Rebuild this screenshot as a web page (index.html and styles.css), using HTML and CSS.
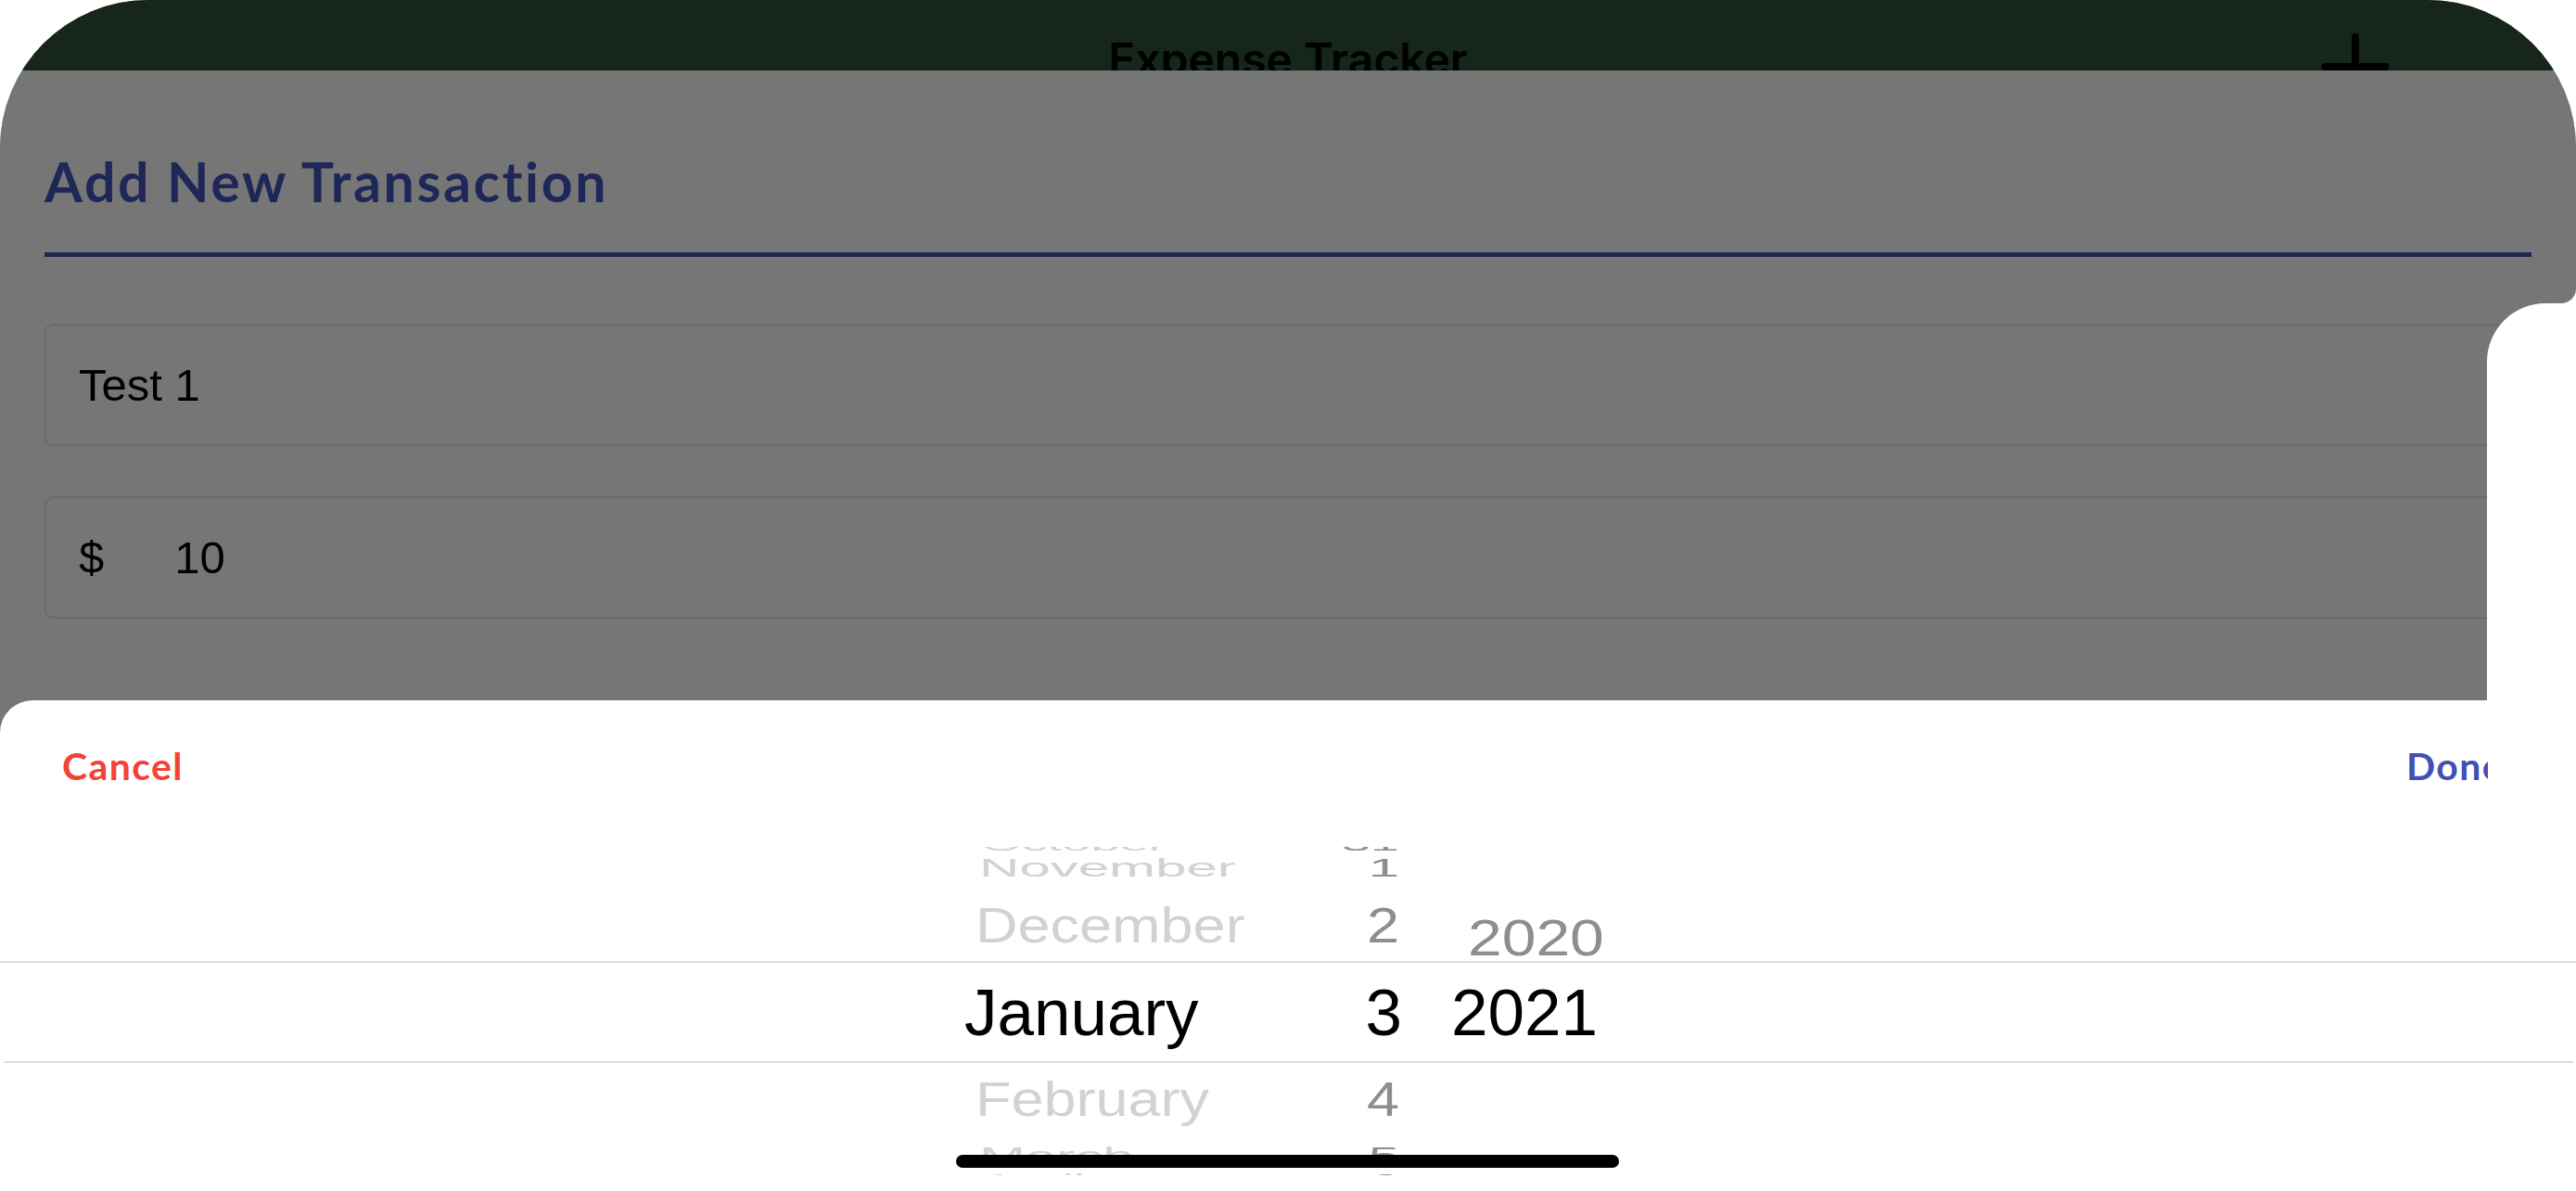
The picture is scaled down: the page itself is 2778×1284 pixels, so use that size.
FILE: index.html
```html
<!DOCTYPE html>
<html lang="en">
<head>
<meta charset="utf-8">
<title>Expense Tracker</title>
<link rel="stylesheet" href="styles.css">
</head>
<body>
<div class="app">
  <header class="topbar">
    <div class="topbar-side"></div>
    <h1 class="topbar-title">Expense Tracker</h1>
    <div class="topbar-side topbar-actions">
      <svg class="plus-icon" width="80" height="80" viewBox="0 0 80 80" aria-hidden="true">
        <path d="M40 8 V73 M7.5 40 H72.5" fill="none" stroke="#000" stroke-width="8" stroke-linecap="round"/>
      </svg>
    </div>
  </header>

  <section class="modal">
    <h2 class="modal-title">Add New Transaction</h2>
    <div class="modal-rule"></div>
    <div class="field field-first"><span class="field-value">Test 1</span></div>
    <div class="field field-second"><span class="field-prefix">$</span><span class="field-value">10</span></div>
    <div class="notch"></div>
    <div class="notch-corner"></div>
  </section>

  <section class="sheet">
    <div class="sheet-toolbar">
      <span class="btn-cancel">Cancel</span>
      <span class="btn-done-clip"><span class="btn-done">Done</span></span>
    </div>
    <div class="picker">
      <div class="picker-col col-month">
        <div class="row r-far-top dim-light shift-far">October</div>
        <div class="row r-near-top dim-light shift-near">November</div>
        <div class="row r-adj-top dim-light">December</div>
        <div class="row r-sel shift-sel">January</div>
        <div class="row r-adj-bot dim-light">February</div>
        <div class="row r-near-bot dim-light shift-near">March</div>
        <div class="row r-far-bot dim-light shift-far">April</div>
      </div>
      <div class="picker-col col-day">
        <div class="row r-far-top dim-dark pad-r">31</div>
        <div class="row r-near-top dim-dark pad-r">1</div>
        <div class="row r-adj-top dim-dark pad-r">2</div>
        <div class="row r-sel">3</div>
        <div class="row r-adj-bot dim-dark pad-r">4</div>
        <div class="row r-near-bot dim-dark pad-r">5</div>
        <div class="row r-far-bot dim-dark pad-r">6</div>
      </div>
      <div class="picker-col col-year">
        <div class="row r-year-prev dim-dark">2020</div>
        <div class="row r-sel">2021</div>
      </div>
    </div>
    <div class="sel-line sel-top"></div>
    <div class="sel-line sel-bottom"></div>
    <div class="home-indicator"></div>
  </section>
</div>
</body>
</html>
```

FILE: styles.css
```css
html, body {
  margin: 0;
  padding: 0;
  width: 2778px;
  height: 1284px;
  overflow: hidden;
  background: #ffffff;
}

.app {
  width: 2778px;
  height: 1284px;
  border-radius: 160px 160px 0 0;
  overflow: hidden;
  background: #767676;
}

/* ---------- top bar ---------- */
.topbar {
  height: 76px;
  overflow: hidden;
  background: #16261a;
  display: grid;
  grid-template-columns: 1fr auto 1fr;
}
.topbar-title {
  margin: 0;
  padding-top: 35px;
  font-family: "Inter", "Liberation Sans", sans-serif;
  font-weight: 600;
  font-size: 48px;
  line-height: 58px;
  color: #000;
  white-space: nowrap;
}
.topbar-actions {
  justify-self: end;
  padding-top: 32px;
  margin-right: 198px;
}
.plus-icon {
  display: block;
}

/* ---------- dimmed modal ---------- */
.modal {
  position: relative;
  height: 679px;
  box-sizing: border-box;
  padding: 85px 48px 0 48px;
  background: #767676;
}
.modal-title {
  margin: 0;
  font-family: "Lato", "Noto Sans", sans-serif;
  font-weight: 700;
  font-size: 59px;
  line-height: 70px;
  letter-spacing: 2.6px;
  color: #1f2758;
  white-space: nowrap;
}
.modal-rule {
  margin-top: 41px;
  height: 5px;
  background: #1f2758;
}
.field {
  height: 132px;
  box-sizing: border-box;
  border: 2px solid #6a6a6a;
  border-radius: 9px;
  display: flex;
  align-items: center;
  padding-left: 35px;
  font-family: "Liberation Sans", Arial, sans-serif;
  font-size: 49px;
  color: #000;
}
.field-first { margin-top: 72px; }
.field-second { margin-top: 54px; }
.field-prefix { margin-right: 76px; }

.notch {
  position: absolute;
  top: 251px;
  right: 0;
  bottom: 0;
  width: 96px;
  background: #ffffff;
  border-top-left-radius: 63px;
}
.notch-corner {
  position: absolute;
  top: 235px;
  right: 0;
  width: 16px;
  height: 16px;
  background: radial-gradient(circle at 0 0, rgba(255,255,255,0) 15.5px, #ffffff 16.5px);
}

/* ---------- bottom sheet ---------- */
.sheet {
  position: relative;
  height: 529px;
  background: #ffffff;
  border-radius: 35px 0 0 0;
}
.sheet-toolbar {
  width: 2683px;
  box-sizing: border-box;
  padding: 47px 0 0 67px;
  display: flex;
  justify-content: space-between;
  overflow: hidden;
  font-family: "Lato", "Noto Sans", sans-serif;
  font-weight: 700;
  font-size: 41px;
  line-height: 48px;
  letter-spacing: 1.4px;
}
.btn-cancel { color: #f44336; }
.btn-done-clip {
  width: 88px;
  overflow: hidden;
  white-space: nowrap;
}
.btn-done { color: #3f51b5; }

/* ---------- wheel picker ---------- */
.picker {
  margin-top: 63px;
  height: 354px;
  overflow: hidden;
  display: flex;
  padding-left: 1052px;
  font-family: "Liberation Sans", Arial, sans-serif;
  color: #000;
}
.picker-col { flex: none; }
.col-month { width: 380px; margin-top: -14px; }
.col-day { width: 80px; margin-top: -14px; text-align: right; }
.col-year { margin-left: 53px; padding-top: 62px; }

.row {
  white-space: nowrap;
  transform-origin: 50% 50%;
}
.r-far-top  { height: 22px; line-height: 22px; font-size: 56px; transform: scaleY(0.35); }
.r-near-top { height: 30px; line-height: 30px; font-size: 60px; transform: scaleY(0.47); }
.r-adj-top  { height: 94px; line-height: 94px; font-size: 63px; transform: scaleY(0.84); }
.r-sel      { height: 94px; line-height: 94px; font-size: 71px; }
.r-adj-bot  { height: 92px; line-height: 92px; font-size: 63px; transform: scaleY(0.82); }
.r-near-bot { height: 32px; line-height: 32px; font-size: 60px; transform: scaleY(0.47); }
.r-far-bot  { height: 20px; line-height: 20px; font-size: 56px; transform: scaleY(0.35); }
.r-year-prev {
  height: 70px;
  line-height: 70px;
  font-size: 66px;
  transform: scaleY(0.85);
  margin-left: 18px;
}

.dim-light { color: #d2d2d2; }
.dim-dark { color: #8e8e8e; }
.shift-sel { margin-left: -12px; }
.shift-near { margin-left: 4px; }
.shift-far { margin-left: 6px; }
.pad-r { padding-right: 3px; }

.sel-line {
  position: absolute;
  height: 2px;
  background: #dcdcdc;
}
.sel-top { top: 281px; left: 0; right: 0; }
.sel-bottom { top: 389px; left: 4px; right: 3px; }

.home-indicator {
  position: absolute;
  top: 490px;
  left: 1031px;
  width: 715px;
  height: 14px;
  border-radius: 7px;
  background: #000;
}
```
